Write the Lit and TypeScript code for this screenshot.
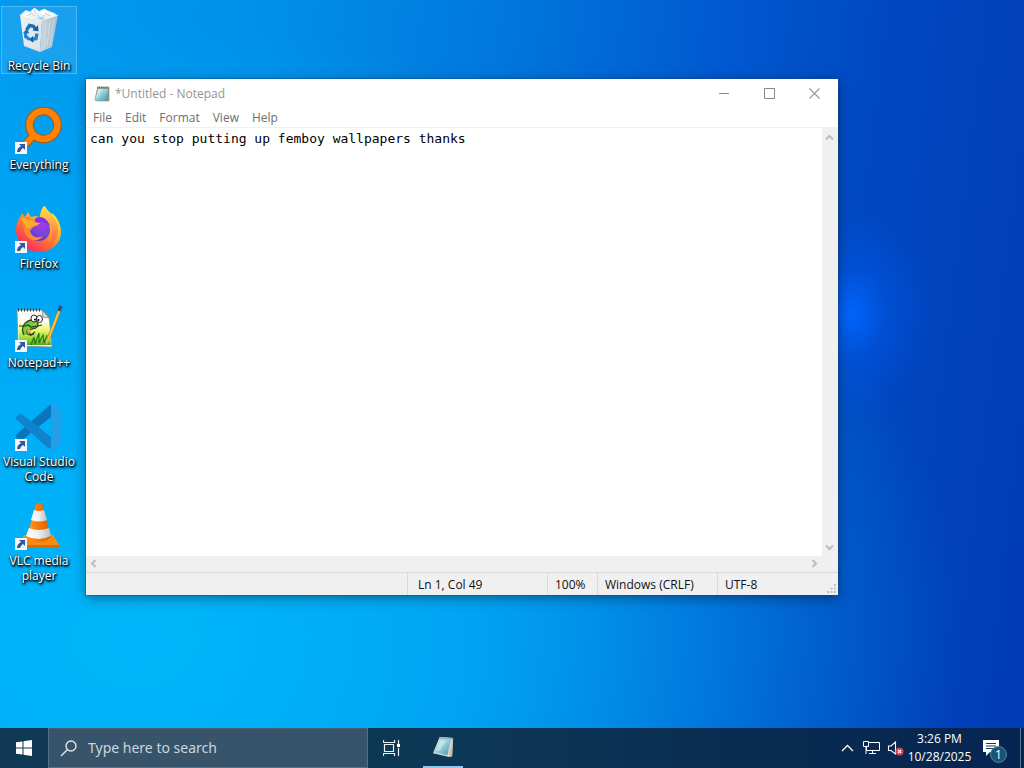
import { LitElement, html, css, svg, nothing, TemplateResult } from "lit";
import { customElement, property, state } from "lit/decorators.js";
import { classMap } from "lit/directives/class-map.js";

const recycleIcon = html`<svg viewBox="0 0 48 48" width="48" height="48" aria-hidden="true">
  <defs>
    <linearGradient id="binL" x1="0" x2="1" y1="0" y2="1"><stop offset="0" stop-color="#eef2f5"/><stop offset="1" stop-color="#dcdfe3"/></linearGradient>
    <linearGradient id="binR" x1="0" x2="1"><stop offset="0" stop-color="#d5dade"/><stop offset="1" stop-color="#a9bccb"/></linearGradient>
  </defs>
  <path d="M6 7 L11 3 L15 5 L19 1 L24 4 L29 2 L34 4 L41 7 L40 12 L8 11 Z" fill="#eef1f4"/>
  <path d="M9 7l5-3 3 3-4 3zM16 4l4-3 4 4-5 3zM26 5l4-3 4 5-5 2zM33 8l4-3 3 3z" fill="#fff"/>
  <path d="M12 9l5-3 3 3M22 8l4 3 4-3M19 3l2 4M30 6l5 3" stroke="#bcc4cb" fill="none"/>
  <path d="M5 8 L27 13 L25 45 L9 39 Z" fill="url(#binL)"/>
  <path d="M27 13 L43 8 L37 40 L25 45 Z" fill="url(#binR)" opacity=".95"/>
  <path d="M31 15L29 41M35 14L32 39M39 12L35 38" stroke="#e3e8ec" stroke-width="1.200" opacity=".5"/>
  <path d="M5 8l22 5 16-5" fill="none" stroke="#fff" stroke-width="1.200" opacity=".8"/>
  <path d="M11.500 23l3-4.500 4 .8 1.700 2.600" fill="none" stroke="#1673bd" stroke-width="3.400"/>
  <path d="M17.500 23.500l6 .8-.5-6z" fill="#0c61a8"/>
  <path d="M10.500 25.500l.2 4 4 3" fill="none" stroke="#2387d1" stroke-width="3.400"/>
  <path d="M8 26l3.600-4 3 4.300z" fill="#1673bd"/>
  <path d="M22 26.500l-1 5-4.500 1" fill="none" stroke="#2387d1" stroke-width="3.400"/>
  <path d="M18 29l-4 3.800 4.500 2.900z" fill="#0c61a8"/>
</svg>`;

const everythingIcon = html`<svg viewBox="0 0 48 48" width="48" height="48" aria-hidden="true">
  <path d="M19 29L7 42" stroke="#a55d16" stroke-width="8"/>
  <circle cx="28.500" cy="19" r="14" fill="none" stroke="#985b20" stroke-width="8.500"/>
  <path d="M20 28L7 42" stroke="#ff8205" stroke-width="6"/>
  <circle cx="28.500" cy="19" r="14" fill="none" stroke="#ff8205" stroke-width="6.500"/>
</svg>`;

const firefoxIcon = html`<svg viewBox="0 0 48 48" width="48" height="48" aria-hidden="true">
  <defs>
    <linearGradient id="fxBody" x1=".85" x2=".2" y1=".05" y2=".95"><stop offset="0" stop-color="#fff24a"/><stop offset=".35" stop-color="#ffb52b"/><stop offset=".65" stop-color="#ff6a35"/><stop offset="1" stop-color="#f2256b"/></linearGradient>
    <radialGradient id="fxCore" cx=".65" cy=".3" r=".8"><stop offset="0" stop-color="#a53bea"/><stop offset=".55" stop-color="#7643dc"/><stop offset="1" stop-color="#4b39bd"/></radialGradient>
    <linearGradient id="fxEdge" x1="0" x2="0" y1="0" y2="1"><stop offset="0" stop-color="#ffe645"/><stop offset="1" stop-color="#ff5b47"/></linearGradient>
  </defs>
  <path d="M29 1C32 4 34 8 36 10C37 9 37 8 37 8C42 12 46 19 46 27C46 39 36 47 24 47C12 47 1 38 1 25C1 19 3 14 6 11L7 8L10 12L13 7L16 12C19 11 22 11 25 12C25 7 27 3 29 1Z" fill="url(#fxBody)"/>
  <path d="M25 12C26 6 28 3 30 1C32 7 43 10 43 26C42 34 38 38 34 40C38 34 38 24 34 18C32 15 28 14 25 12Z" fill="url(#fxEdge)"/>
  <circle cx="24" cy="25" r="11" fill="url(#fxCore)"/>
  <path d="M20 14C24 10 32 12 35 21L30 18C28 16 24 16 22 18Z" fill="#8a2fe0"/>
  <path d="M7 11C12 13 16 12 20 15C19 16 21 18 25 18C24 20 20 21 18 22C17 24 17 24 15 25C16 32 22 34 28 31C25 37 11 38 9 24C8 19 7 15 7 11Z" fill="#ff8a2c"/>
  <path d="M6 13C11 14 15 14 19 16C18 18 21 18 25 18C23 20 19 21 17 22L11 23Z" fill="#ffad29"/>
</svg>`;

const nppIcon = html`<svg viewBox="0 0 48 48" width="48" height="48" aria-hidden="true">
  <defs><linearGradient id="nppG" x1="0" x2="0" y1="0" y2="1"><stop offset="0" stop-color="#fdfef0"/><stop offset=".4" stop-color="#eaf46a"/><stop offset=".75" stop-color="#93d932"/><stop offset="1" stop-color="#4ba31e"/></linearGradient></defs>
  <path d="M2 6H27L34 13L37 43L3 42Z" fill="#fff" stroke="#888" stroke-width=".8"/>
  <path d="M3 18L34 17L36 41L4 41Z" fill="url(#nppG)"/>
  <path d="M3 6H27" stroke="#333" stroke-width="3" stroke-dasharray="1 2"/>
  <path d="M4 10H27" stroke="#ccc" stroke-dasharray="1 2"/>
  <path d="M27 6l1 7 6 1z" fill="#ddd" stroke="#777" stroke-width=".7"/>
  <path d="M9 31C5 24 10 16 18 16C24 16 24 22 21 24L13 26C10 28 13 33 19 30" fill="#7ecb40" stroke="#2f4a24" stroke-width="1.300"/>
  <ellipse cx="19" cy="14.500" rx="3" ry="3.500" fill="#fff" stroke="#222"/>
  <ellipse cx="24.500" cy="15" rx="3" ry="3.500" fill="#fff" stroke="#222"/>
  <circle cx="20" cy="15.500" r="1"/><circle cx="23.500" cy="16" r="1"/>
  <path d="M4 22H10L13 21L16 23L23 22L27 21M13 27L16 31L20 28" fill="none" stroke="#2b3b20" stroke-width="1.200"/>
  <circle cx="14" cy="27" r="2" fill="#f2a535"/>
  <path d="M16 41l3-8 1 7 4-11 0 10 4-8 1 8 3-8" fill="none" stroke="#257d16" stroke-width="1.200"/>
  <path d="M45 5L33 36" stroke="#9a7a2c" stroke-width="3.400"/>
  <path d="M45 5L33 36" stroke="#f4c542" stroke-width="2.200"/>
  <path d="M46 2L44 7" stroke="#3b4b78" stroke-width="3.600"/>
  <path d="M31 35l4 1-4 5z" fill="#d8b07a"/>
</svg>`;

const codeIcon = html`<svg viewBox="0 0 48 48" width="48" height="48" aria-hidden="true">
  <path d="M2 31L36 1V14L7 37Q5 38 3 36L1 34Q0 32 2 31Z" fill="#0875bd"/>
  <path d="M2 17Q0 15 2 13L4 11Q6 10 8 12L36 34V46Q34 46 32 44Z" fill="#0f83cc"/>
  <path d="M34 1Q36 0 38 1L46 5Q47 6 47 8V40Q47 42 45 43L37 47Q35 47 34 46Q36 46 36 43V4Q36 2 34 1Z" fill="#229fe9"/>
</svg>`;

const vlcIcon = html`<svg viewBox="0 0 48 48" width="48" height="48" aria-hidden="true">
  <defs>
    <linearGradient id="vlcO" x1="0" x2="1"><stop offset="0" stop-color="#ff9d35"/><stop offset=".4" stop-color="#fa7d09"/><stop offset="1" stop-color="#d65a00"/></linearGradient>
    <linearGradient id="vlcW" x1="0" x2="1"><stop offset="0" stop-color="#fff"/><stop offset=".5" stop-color="#eee"/><stop offset="1" stop-color="#bdbdbd"/></linearGradient>
  </defs>
  <path d="M9 33H38L44 43Q45 46 42 46H5Q3 46 4 43Z" fill="#f98a12"/>
  <path d="M4 43H44V46H4Z" fill="#df6a00"/>
  <path d="M21 2Q24 0 27 2L36 35Q31 40 24 40Q16 40 12 35Z" fill="url(#vlcO)"/>
  <path d="M19 8Q24 10 29 8L32 18Q24 21 16 18Z" fill="url(#vlcW)"/>
  <path d="M14 26Q24 30 34 26L36 34Q24 40 11 34Z" fill="url(#vlcW)"/>
</svg>`;

const notepadIcon = (size: number, tilt: boolean) => html`<svg viewBox="0 0 24 24" width=${size} height=${size} aria-hidden="true">
  <defs><linearGradient id="npG" x1="0" x2="1" y1="0" y2="1"><stop offset="0" stop-color="#d7f1f3"/><stop offset=".5" stop-color="#8fcdd6"/><stop offset="1" stop-color="#3e96a8"/></linearGradient></defs>
  ${tilt
    ? svg`<path d="M8 1L22 2L21 21L18 22L1 18Z" fill="#dcdcd3"/><path d="M18 22L21 20L22 3L18 18Z" fill="#c3bfae"/><path d="M8 3L20 4L16 20L2 17Z" fill="url(#npG)"/><path d="M8 1L22 2V4L7 3Z" fill="#9fb3bb"/><path d="M9 5L15 5L8 15L4 16Z" fill="#fff" opacity=".35"/>`
    : svg`<path d="M5 2H23V23H3L1 20Z" fill="#8d8f83"/><path d="M6 4H21L19 22H1Z" fill="url(#npG)"/><path d="M5 2H22" stroke="#47616a" stroke-width="2.500" stroke-dasharray="1.500 1.200"/><path d="M7 5H13L6 17L3 19Z" fill="#fff" opacity=".35"/>`}
</svg>`;

interface Shortcut {
  label: string;
  icon: TemplateResult;
  link: boolean;
}

const shortcuts: Shortcut[] = [
  { label: "Recycle Bin", icon: recycleIcon, link: false },
  { label: "Everything", icon: everythingIcon, link: true },
  { label: "Firefox", icon: firefoxIcon, link: true },
  { label: "Notepad++", icon: nppIcon, link: true },
  { label: "Visual Studio Code", icon: codeIcon, link: true },
  { label: "VLC media player", icon: vlcIcon, link: true },
];

@customElement("desktop-shortcut")
export class DesktopShortcut extends LitElement {
  @property({ attribute: false }) item!: Shortcut;
  @property({ type: Boolean }) selected = false;

  static styles = css`
    :host { display: block; }
    .shortcut {
      display: flex; flex-direction: column; align-items: center; gap: 3px;
      width: 100%; padding: 0;
      border: 1px solid transparent; background: none; color: #fff;
      font: 12px/15px "Open Sans", "Noto Sans", sans-serif;
      text-shadow: 0 1px 2px #000, 1px 1px 2px #000, 1px 2px 3px rgba(0, 0, 0, 0.7);
    }
    .selected { background: rgba(120, 190, 240, 0.2); border-color: rgba(140, 205, 250, 0.5); }
    .picture { position: relative; display: block; height: 48px; }
    .picture svg { display: block; }
    .arrow { position: absolute; left: 0; bottom: 0; }
    .label { margin: 0 -4px; }
  `;

  render() {
    return html`<button class=${classMap({ shortcut: true, selected: this.selected })}>
      <span class="picture">
        ${this.item.icon}
        ${this.item.link
          ? html`<svg class="arrow" viewBox="0 0 12 12" width="12" height="12" aria-hidden="true">
              <path d="M0 0H12V12H0Z" fill="#f4f6fa"/>
              <path d="M4 2H10V8L8 6Q6 7 5 10H2Q2 6 6 4Z" fill="#2b5a9e"/>
            </svg>`
          : nothing}
      </span>
      <span class="label">${this.item.label}</span>
    </button>`;
  }
}

@customElement("notepad-window")
export class NotepadWindow extends LitElement {
  @state() private text = "can you stop putting up femboy wallpapers thanks";

  static styles = css`
    :host {
      display: flex; flex-direction: column; box-sizing: border-box;
      background: #fff; color: #111;
      font: 12px/16px "Open Sans", "Noto Sans", sans-serif;
      box-shadow: 0 0 0 1px rgba(20, 70, 120, 0.4), 0 3px 12px rgba(0, 0, 0, 0.4);
    }
    button { border: 0; padding: 0; background: none; font: inherit; color: inherit; }
    svg { display: block; }
    .title { display: flex; align-items: center; height: 29px; padding-left: 8px; gap: 5px; color: #949494; }
    .name { flex: 1; font-weight: 400; }
    .caption { display: grid; place-items: center; width: 45px; height: 28px; }
    .captions { display: flex; padding-right: 1px; }
    .menu { display: flex; gap: 13px; height: 19px; align-items: center; padding: 0 7px; color: #6d6d6d; border-bottom: 1px solid #f0f0f0; }
    .body { flex: 1; min-height: 0; display: grid; grid-template: 1fr 16px / 1fr 16px; background: #f0f0f0; }
    .editor {
      display: block; width: 100%; height: 100%; box-sizing: border-box; resize: none;
      border: 0; outline: 0; padding: 2px 4px; overflow: hidden; background: #fff; color: #000;
      font: 13px/17px "DejaVu Sans Mono", "Liberation Mono", monospace;
    }
    .vbar { display: flex; flex-direction: column; justify-content: space-between; }
    .hbar { display: flex; justify-content: space-between; }
    .step { display: grid; place-items: center; width: 15px; height: 18px; }
    .hbar .step { height: 15px; }
    .status {
      display: grid; grid-template-columns: 1fr 140px 50px 120px 121px; height: 23px;
      box-sizing: border-box; background: #f0f0f0; border-top: 1px solid #d9d9d9; position: relative;
    }
    .cell { border-left: 1px solid #d9d9d9; padding: 4px 7px 2px; white-space: nowrap; }
    .cell.first { border: 0; }
    .cell.wide { padding-left: 10px; }
    .grip { position: absolute; right: 1px; bottom: 1px; }
  `;

  private chevron(d: string) {
    return html`<svg width="9" height="9" viewBox="0 0 9 9" aria-hidden="true"><path d=${d} fill="none" stroke="#bcbcbc" stroke-width="2"/></svg>`;
  }

  render() {
    return html`
      <header class="title">
        ${notepadIcon(16, false)}
        <span class="name">*Untitled - Notepad</span>
        <div class="captions">
          <button class="caption" aria-label="Minimize"><svg width="11" height="11"><path d="M0 5.500H10" stroke="#888"/></svg></button>
          <button class="caption" aria-label="Maximize"><svg width="11" height="11"><path d="M.5 .5H10.500V10.500H.5Z" fill="none" stroke="#888"/></svg></button>
          <button class="caption" aria-label="Close"><svg width="11" height="11"><path d="M.5 .5L10.500 10.500M10.500 .5L.5 10.500" stroke="#999" stroke-width="1.200"/></svg></button>
        </div>
      </header>
      <nav class="menu">
        ${["File", "Edit", "Format", "View", "Help"].map((m) => html`<button>${m}</button>`)}
      </nav>
      <div class="body">
        <textarea class="editor" aria-label="Text editor" spellcheck="false" .value=${this.text}></textarea>
        <div class="vbar">
          <button class="step" aria-label="Scroll up">${this.chevron("M1 6.500L4.500 3L8 6.500")}</button>
          <button class="step" aria-label="Scroll down">${this.chevron("M1 2.500L4.500 6L8 2.500")}</button>
        </div>
        <div class="hbar">
          <button class="step" aria-label="Scroll left">${this.chevron("M6.500 1L3 4.500L6.500 8")}</button>
          <button class="step" aria-label="Scroll right">${this.chevron("M2.500 1L6 4.500L2.500 8")}</button>
        </div>
      </div>
      <footer class="status">
        <span class="cell first"></span>
        <span class="cell wide">Ln 1, Col 49</span>
        <span class="cell">100%</span>
        <span class="cell">Windows (CRLF)</span>
        <span class="cell">UTF-8</span>
        <svg class="grip" width="10" height="10" aria-hidden="true"><path d="M7 0h2v2h-2zM7 3.500h2v2h-2zM7 7h2v2h-2zM3.500 3.500h2v2h-2zM3.500 7h2v2h-2zM0 7h2v2h-2z" fill="#c2c2c2"/></svg>
      </footer>
    `;
  }
}

@customElement("task-bar")
export class TaskBar extends LitElement {
  static styles = css`
    :host {
      display: flex; height: 40px; color: #fff;
      background: linear-gradient(90deg, #103a54 0%, #0d3855 45%, #092d52 70%, #062450 100%);
      font: 12px/18px "Open Sans", "Noto Sans", sans-serif;
    }
    button { border: 0; padding: 0; background: none; font: inherit; color: inherit; display: grid; place-items: center; }
    svg { display: block; }
    .start { width: 48px; }
    .search {
      display: flex; align-items: center; gap: 11px; width: 320px; box-sizing: border-box;
      padding: 0 11px; background: #38546a; border: 1px solid #52718a; border-top-color: #4b5f74;
    }
    .field { flex: 1; min-width: 0; border: 0; outline: 0; padding: 0; background: none; color: #fff; font: 14px/20px "Noto Sans", "Open Sans", sans-serif; }
    .field::placeholder { color: #cbd6df; opacity: 1; }
    .view { width: 47px; }
    .app { width: 40px; margin-left: 8px; border-bottom: 2px solid #8cc8f5; }
    .tray { margin-left: auto; display: flex; }
    .small { width: 24px; }
    .clock { width: 65px; text-align: center; align-content: center; }
    .notes { width: 48px; padding-right: 10px; }
    .bell { position: relative; }
    .badge {
      position: absolute; left: 7px; top: 6px; width: 17px; height: 17px; border-radius: 50%;
      background: #1b5278; border: 1px solid #5683a3; box-sizing: border-box;
      line-height: 15px; text-align: center;
    }
    .peek { width: 3px; border-left: 1px solid #5b7492; }
  `;

  render() {
    return html`
      <button class="start" aria-label="Start"><svg width="16" height="16" viewBox="0 0 16 16"><path d="M0 2.300L6.500 1.400V7.500H0ZM7.500 1.200L16 0V7.500H7.500ZM0 8.500H6.500V14.600L0 13.700ZM7.500 8.500H16V16L7.500 14.800Z" fill="#fff"/></svg></button>
      <label class="search">
        <svg width="17" height="17" viewBox="0 0 17 17" aria-hidden="true"><circle cx="11" cy="6" r="5" fill="none" stroke="#dce5ec" stroke-width="1.400"/><path d="M7.500 9.500L1 16" stroke="#dce5ec" stroke-width="1.400"/></svg>
        <input class="field" type="text" placeholder="Type here to search" aria-label="Search" />
      </label>
      <button class="view" aria-label="Task View"><svg width="17" height="16" viewBox="0 0 17 16"><path d="M.5 0V2.500H11.500V0M.5 16V13.500H11.500V16M1.500 4.500H10.500V11.500H1.500ZM15.500 0V4M15.500 8V16" fill="none" stroke="#e8eef3" stroke-width="1.200"/><path d="M14 4h3v3h-3z" fill="#fff"/></svg></button>
      <button class="app" aria-label="Notepad">${notepadIcon(23, true)}</button>
      <div class="tray">
        <button class="small" aria-label="Show hidden icons"><svg width="13" height="8"><path d="M1 7L6.500 1.500L12 7" fill="none" stroke="#fff" stroke-width="1.300"/></svg></button>
        <button class="small" aria-label="Network"><svg width="17" height="14" viewBox="0 0 17 14"><path d="M5 1.500H16.500V9.500H3.500V6M9.500 9.500V12.500M6 12.500H13M.5 .5H5.500V5.500H.5ZM3 5.500V13" fill="none" stroke="#fff"/></svg></button>
        <button class="small" aria-label="Volume"><svg width="17" height="15" viewBox="0 0 17 15"><path d="M1.500 5H4L8.500 1V13L4 9.500H1.500Z" fill="none" stroke="#fff" stroke-width="1.100"/><circle cx="12.500" cy="10.500" r="4" fill="#e23b44"/><path d="M10.800 8.800l3.400 3.400M14.200 8.800l-3.400 3.400" stroke="#fff" stroke-width="1.200"/></svg></button>
        <button class="clock"><span>3:26 PM<br />10/28/2025</span></button>
        <button class="notes" aria-label="Notifications"><span class="bell">
          <svg width="16" height="16" viewBox="0 0 16 16"><path d="M0 0H16V12H7L3 16V12H0Z" fill="#fff"/><path d="M3 3.500H13M3 6H13M3 8.500H10" stroke="#153a61"/></svg>
          <span class="badge">1</span>
        </span></button>
        <span class="peek"></span>
      </div>
    `;
  }
}

@customElement("app-root")
export class AppRoot extends LitElement {
  static styles = css`
    :host { display: flex; flex-direction: column; height: 100vh; overflow: hidden; }
    .desktop {
      position: relative; flex: 1; min-height: 0; padding: 6px 1px;
      background:
        radial-gradient(ellipse 8% 14% at 83% 43%, rgba(0, 102, 255, 0.95), rgba(0, 94, 245, 0.35) 45%, rgba(0, 90, 235, 0) 100%),
        radial-gradient(ellipse 80% 85% at 14% 88%, rgba(0, 184, 250, 0.95), rgba(0, 180, 250, 0.75) 40%, rgba(0, 150, 240, 0) 100%),
        linear-gradient(97deg, #009cf0 0%, #0090ea 24%, #0078de 45%, #0058d0 66%, #0048c2 80%, #003cb6 100%);
    }
    .icons { display: grid; grid-auto-rows: 99px; width: 76px; }
    .window { position: absolute; left: 86px; top: 79px; right: 186px; bottom: 133px; }
  `;

  render() {
    return html`
      <main class="desktop">
        <div class="icons">
          ${shortcuts.map((s, i) => html`<desktop-shortcut .item=${s} ?selected=${i === 0}></desktop-shortcut>`)}
        </div>
        <notepad-window class="window"></notepad-window>
      </main>
      <task-bar></task-bar>
    `;
  }
}
